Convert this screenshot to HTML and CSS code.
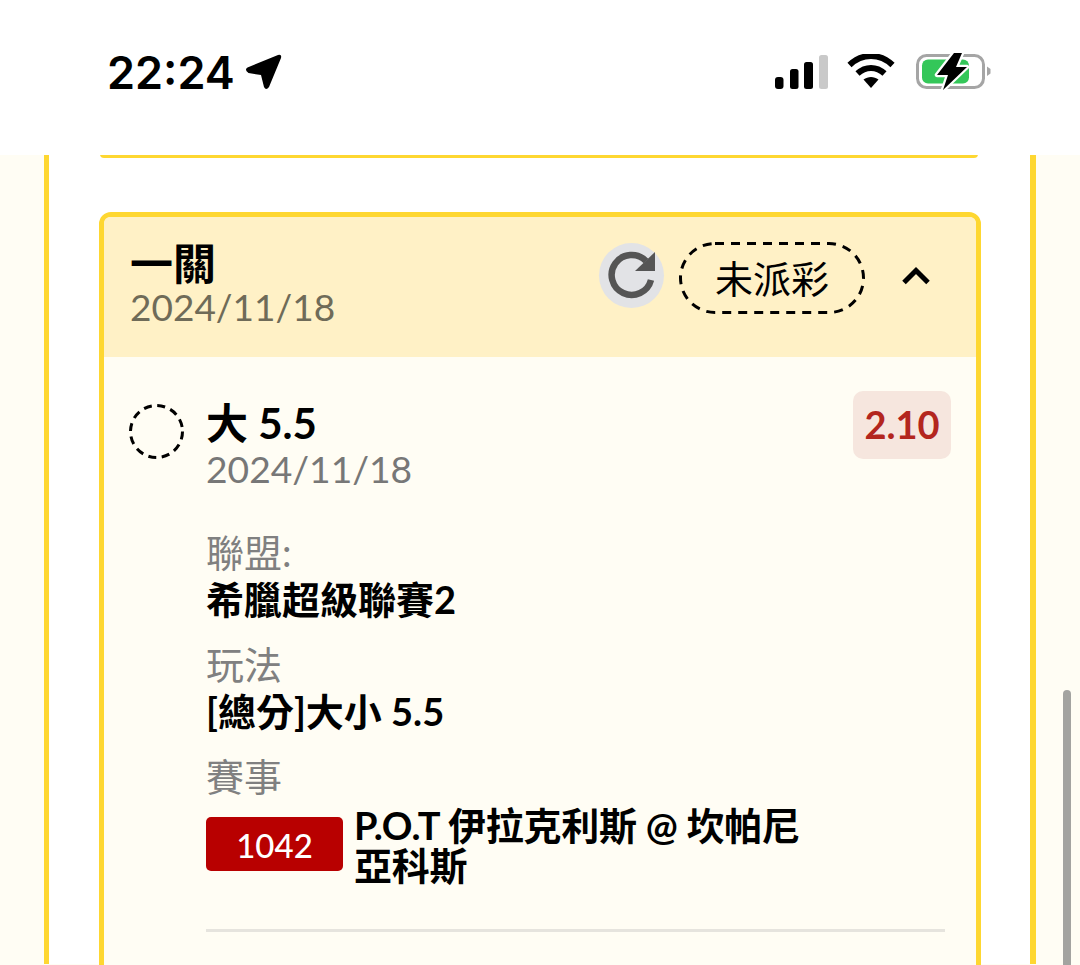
FILE: index.html
```html
<!DOCTYPE html>
<html lang="zh-Hant">
<head>
	<meta charset="UTF-8">
	<title>一關</title>
	<link rel="stylesheet" href="styles.css">
</head>
<body>
	<div class="status">
		<div class="clock">
			<span>22:24</span>
			<svg class="arrow" width="38" height="38" viewBox="0 0 38 38"><path d="M2.500 14.500 L33 2 Q37 1 36 5 L24 34 Q21 38 19 34 L16 22 L3.500 20 Q-1 17 2.500 14.500 Z" fill="#000"/></svg>
		</div>
		<div class="status-icons">
			<svg width="54" height="36" viewBox="0 0 54 36">
				<rect x="1" y="23" width="8.5" height="12" rx="3" fill="#000"/>
				<rect x="16" y="15" width="8.5" height="20" rx="2.5" fill="#000"/>
				<rect x="30" y="8" width="9" height="27" rx="2.5" fill="#000"/>
				<rect x="45" y="1" width="9" height="34" rx="2.5" fill="#c9c9c9"/>
			</svg>
			<svg class="wifi" width="48" height="36" viewBox="0 0 48 36">
				<path d="M2.500 11 C15 -1 33 -1 45.500 11" fill="none" stroke="#000" stroke-width="6"/>
				<path d="M10.500 19.500 C18.500 12 29.500 12 37.500 19.500" fill="none" stroke="#000" stroke-width="6"/>
				<path d="M16.500 25.500 C21 22 27 22 31.500 25.500 L24 34 Z" fill="#000"/>
			</svg>
			<svg class="battery" width="76" height="40" viewBox="0 0 76 40">
				<rect x="1.500" y="3.500" width="66" height="32" rx="9" fill="none" stroke="#a5a5a5" stroke-width="3"/>
				<rect x="6" y="7.500" width="47" height="24" rx="6" fill="#34c759"/>
				<path d="M71 14.500 L74.500 17 V21.500 L71 24 Z" fill="#a5a5a5"/>
				<path d="M38 1 L21 23 H32 L27 38 L51 15 H40 L46 1 Z" fill="#000" stroke="#fff" stroke-width="4.500" stroke-linejoin="round" paint-order="stroke"/>
			</svg>
		</div>
	</div>
	<div class="page">
		<div class="outer">
			<div class="prev-card"></div>
			<div class="card">
				<div class="card-head">
					<div class="head-text">
						<div class="card-title">一關</div>
						<div class="card-date">2024/11/18</div>
					</div>
					<div class="refresh">
						<svg width="50" height="50" viewBox="0 0 50 50">
							<path d="M44 30 A20 20 0 1 1 39 11" fill="none" stroke="#555" stroke-width="6.500"/>
							<path d="M48 2 V21 H28 Z" fill="#555"/>
						</svg>
					</div>
					<div class="state">
						未派彩
						<svg class="state-line" width="186" height="72" viewBox="0 0 186 72"><rect x="1.500" y="1.500" width="183" height="69" rx="34.500" fill="none" stroke="#000" stroke-width="3" stroke-dasharray="9 7"/></svg>
					</div>
					<svg class="chevron" width="30" height="20" viewBox="0 0 30 20"><path d="M3 16.500 L15 4.500 L27 16.500" fill="none" stroke="#000" stroke-width="5"/></svg>
				</div>
				<div class="card-body">
					<div class="bet">
						<svg class="mark" width="55" height="55" viewBox="0 0 55 55"><circle cx="27.500" cy="27.500" r="26" fill="none" stroke="#000" stroke-width="3" stroke-dasharray="8 5.610"/></svg>
						<div class="bet-info">
							<div class="bet-top">
								<div>
									<div class="bet-name">大 5.5</div>
									<div class="bet-date">2024/11/18</div>
								</div>
								<div class="odds">2.10</div>
							</div>
							<div class="field first">
								<div class="field-label">聯盟:</div>
								<div class="field-value">希臘超級聯賽2</div>
							</div>
							<div class="field">
								<div class="field-label">玩法</div>
								<div class="field-value">[總分]大小 5.5</div>
							</div>
							<div class="field">
								<div class="field-label">賽事</div>
								<div class="match">
									<span class="match-no">1042</span>
									<span class="match-name">P.O.T 伊拉克利斯 @ 坎帕尼亞科斯</span>
								</div>
							</div>
							<div class="divider"></div>
						</div>
					</div>
				</div>
			</div>
		</div>
		<div class="scrollbar"></div>
	</div>
</body>
</html>
```

FILE: styles.css
```css
html, body {
	margin:0;
	height:965px;
	overflow:hidden;
}
body {
	background:#fff;
	color:#000;
	font-family:"Lato","Noto Sans CJK TC",sans-serif;
	display:flex;
	flex-direction:column;
}
.status {
	height:155px;
	flex:none;
	display:flex;
	justify-content:space-between;
	align-items:flex-start;
	padding:0 88px 0 107px;
	background:#fff;
}
.clock {
	display:flex;
	align-items:center;
	gap:10px;
	margin-top:46px;
	height:52px;
	font-family:"Inter",sans-serif;
	font-weight:600;
	font-size:45px;
}
.status-icons {
	display:flex;
	align-items:flex-start;
	margin-top:54px;
}
.wifi {
	margin-left:19px;
}
.battery {
	margin-left:21px;
	margin-top:-2px;
}
.page {
	position:relative;
	flex:1;
	min-height:0;
	background:#fffdf4;
	padding:0 44px;
	overflow:hidden;
}
.outer {
	height:100%;
	box-sizing:border-box;
	background:#fff;
	border-left:5px solid #fed731;
	border-right:6px solid #fed731;
	padding:0 49px 0 50px;
}
.prev-card {
	height:1px;
	margin:-1px 3px 0 1px;
	border-bottom:3px solid #fed731;
	border-radius:0 0 14px 14px;
}
.card {
	margin-top:54px;
	border:5px solid #fed731;
	border-radius:12px;
	background:#fffdf4;
}
.card-head {
	height:140px;
	box-sizing:border-box;
	display:flex;
	align-items:center;
	padding:0 45px 22px 26px;
	background:#fff1c6;
	border-radius:6px 6px 0 0;
}
.head-text {
	flex:1;
	margin-top:18px;
}
.card-title {
	font-size:43px;
	font-weight:700;
	line-height:44px;
}
.card-date {
	font-size:37px;
	line-height:42px;
	color:#6f6b58;
}
.refresh {
	width:65px;
	height:65px;
	margin-top:-2px;
	border-radius:50%;
	background:#e2e3e6;
	display:flex;
	align-items:center;
	justify-content:center;
}
.state {
	position:relative;
	width:186px;
	height:72px;
	margin-top:4px;
	margin-left:15px;
	font-size:38px;
	line-height:72px;
	text-align:center;
}
.state-line {
	position:absolute;
	left:0;
	top:0;
}
.chevron {
	margin-left:36px;
}
.card-body {
	padding:34px 30px 80px 25px;
}
.bet {
	display:flex;
}
.mark {
	flex:none;
	margin:13px 22px 0 0;
}
.bet-info {
	flex:1;
}
.bet-top {
	display:flex;
	justify-content:space-between;
	align-items:flex-start;
}
.bet-name {
	margin-top:10px;
	font-size:42px;
	font-weight:700;
	line-height:45px;
}
.bet-date {
	font-size:37.2px;
	line-height:46px;
	color:#777;
}
.odds {
	width:98px;
	height:68px;
	margin-right:-5px;
	border-radius:10px;
	background:#f6e6de;
	color:#b3261e;
	font-size:38px;
	font-weight:700;
	line-height:67px;
	text-align:center;
}
.field {
	margin-top:18px;
}
.field.first {
	margin-top:37px;
}
.field-label {
	font-size:38px;
	line-height:47px;
	color:#808080;
}
.field-value {
	font-size:38px;
	font-weight:700;
	line-height:47px;
}
.match {
	display:flex;
	align-items:center;
	gap:11px;
	margin-top:5px;
}
.match-no {
	width:137px;
	height:54px;
	flex:none;
	margin-top:-2px;
	border-radius:5px;
	background:#b80000;
	color:#fff;
	font-size:33px;
	font-weight:500;
	line-height:56px;
	text-align:center;
}
.match-name {
	width:465px;
	font-size:38px;
	font-weight:700;
	line-height:40px;
	letter-spacing:-0.25px;
}
.divider {
	height:3px;
	margin-top:44px;
	margin-right:1px;
	background:#e6e4de;
}
.scrollbar {
	position:absolute;
	left:1063px;
	top:535px;
	width:8px;
	height:300px;
	border-radius:4px;
	background:#a3a3a0;
}
```
